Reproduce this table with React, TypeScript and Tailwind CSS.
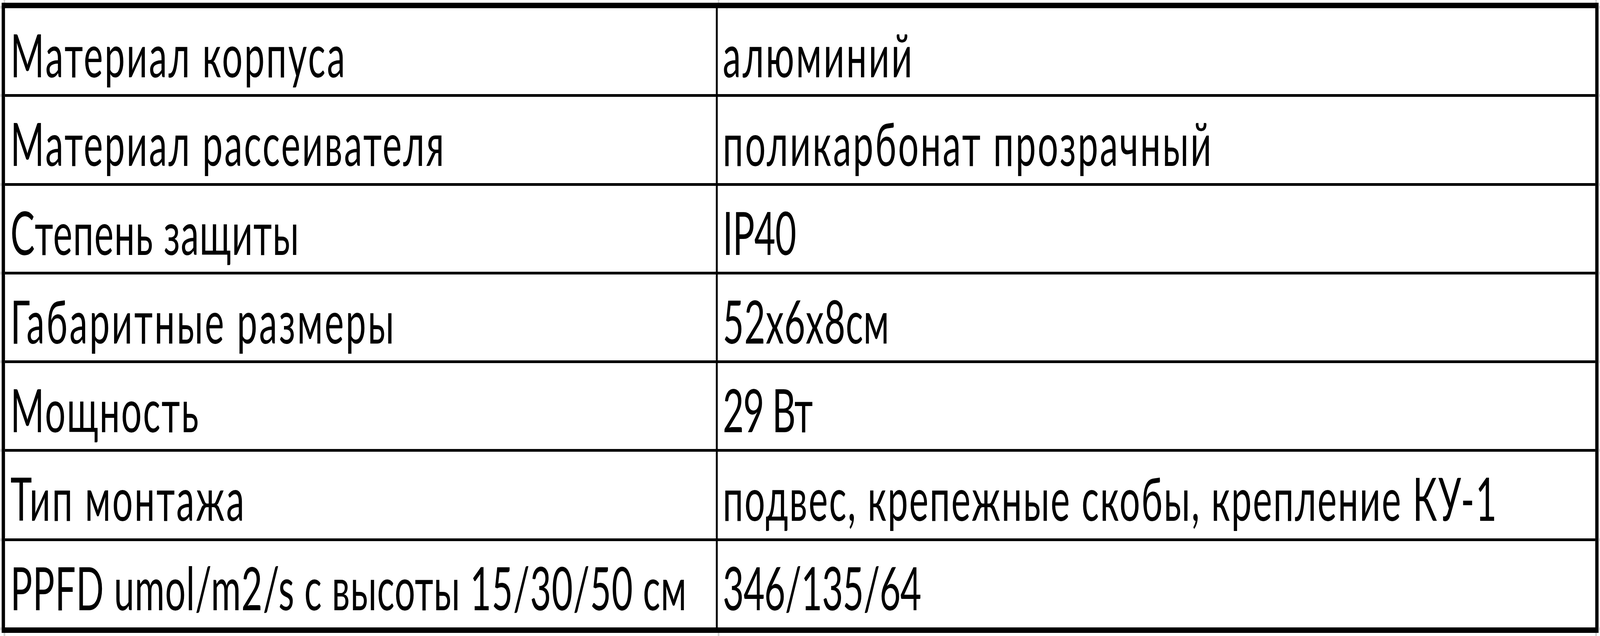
import React, { useEffect, useState } from "react";

type Row = { a: string; at: string; b: string; bt: string; h: string };

const rows: Row[] = [
  { a: "Материал корпуса", at: "tracking-[6.5px]", b: "алюминий", bt: "tracking-[7.5px]", h: "h-[220px]" },
  { a: "Материал рассеивателя", at: "tracking-[6.5px]", b: "поликарбонат прозрачный", bt: "tracking-[7.25px]", h: "h-[228px] border-t-[7px]" },
  { a: "Степень защиты", at: "tracking-[3px]", b: "IP40", bt: "tracking-[-1px]", h: "h-[227px] border-t-[7px]" },
  { a: "Габаритные размеры", at: "tracking-[7.5px]", b: "52х6х8см", bt: "tracking-[1.5px]", h: "h-[227px] border-t-[7px]" },
  { a: "Мощность", at: "tracking-[5px]", b: "29 Вт", bt: "tracking-[-3px]", h: "h-[227px] border-t-[7px]" },
  { a: "Тип монтажа", at: "tracking-[6.5px]", b: "подвес, крепежные скобы, крепление КУ-1", bt: "tracking-[5px]", h: "h-[229px] border-t-[7px]" },
  { a: "PPFD umol/m2/s с высоты 15/30/50 см", at: "tracking-[1.75px]", b: "346/135/64", bt: "tracking-[-1.5px]", h: "h-[228px] border-t-[7px]" },
];

const DESIGN_W = 6721;

function useFitScale() {
  const get = () =>
    typeof window === "undefined" ? 1 : Math.min(1, window.innerWidth / DESIGN_W);
  const [s, setS] = useState(get);
  useEffect(() => {
    const on = () => setS(get());
    window.addEventListener("resize", on);
    return () => window.removeEventListener("resize", on);
  }, []);
  return s;
}

function Stub({ className }: { className: string }) {
  return <div className={`shrink-0 bg-[#d4d4d4] ${className}`} />;
}

function SideTicks({ w }: { w: string }) {
  return (
    <div className={`${w} shrink-0 flex flex-col`}>
      <div className="h-[15px] shrink-0" />
      <Stub className="h-[7px]" />
      <div className="h-[219px] shrink-0" />
      <Stub className="h-[7px]" />
      <div className="h-[221px] shrink-0" />
      <Stub className="h-[7px]" />
      <div className="h-[220px] shrink-0" />
      <Stub className="h-[7px]" />
      <div className="h-[220px] shrink-0" />
      <Stub className="h-[7px]" />
      <div className="h-[220px] shrink-0" />
      <Stub className="h-[7px]" />
      <div className="h-[222px] shrink-0" />
      <Stub className="h-[7px]" />
      <div className="h-[221px] shrink-0" />
      <Stub className="h-[7px]" />
    </div>
  );
}

function EdgeTicks({ h }: { h: string }) {
  return (
    <div className={`${h} shrink-0 flex`}>
      <div className="w-[8px] shrink-0" />
      <Stub className="w-[7px]" />
      <div className="w-[2993px] shrink-0" />
      <Stub className="w-[7px]" />
      <div className="flex-1" />
      <Stub className="w-[7px]" />
      <div className="w-[7px] shrink-0" />
    </div>
  );
}

export default function App() {
  const s = useFitScale();
  return (
    <div className="w-full h-[1629px] bg-white overflow-hidden">
      <div
        className="w-[6721px] h-[1629px] origin-top-left flex"
        style={{ transform: `scaleX(${s})` }}
      >
        <SideTicks w="w-[7px]" />
        <div className="w-[6708px] shrink-0 flex flex-col">
          <EdgeTicks h="h-[7px]" />
          <div
            className="border-[14px] border-black flex flex-col text-black"
            style={{ fontFamily: "Lato, 'Noto Sans', sans-serif" }}
          >
            {rows.map((r, i) => (
              <div key={i} className={`flex border-black ${r.h}`}>
                <div
                  className={`w-[2994px] shrink-0 border-r-[8px] border-black pl-[23px] pt-[15px] text-[153px] leading-[206px] whitespace-nowrap ${r.at}`}
                >
                  {r.a}
                </div>
                <div
                  className={`flex-1 pl-[21px] pt-[15px] text-[153px] leading-[206px] whitespace-nowrap ${r.bt}`}
                >
                  {r.b}
                </div>
              </div>
            ))}
          </div>
          <EdgeTicks h="h-[8px]" />
        </div>
        <SideTicks w="w-[6px]" />
      </div>
    </div>
  );
}
